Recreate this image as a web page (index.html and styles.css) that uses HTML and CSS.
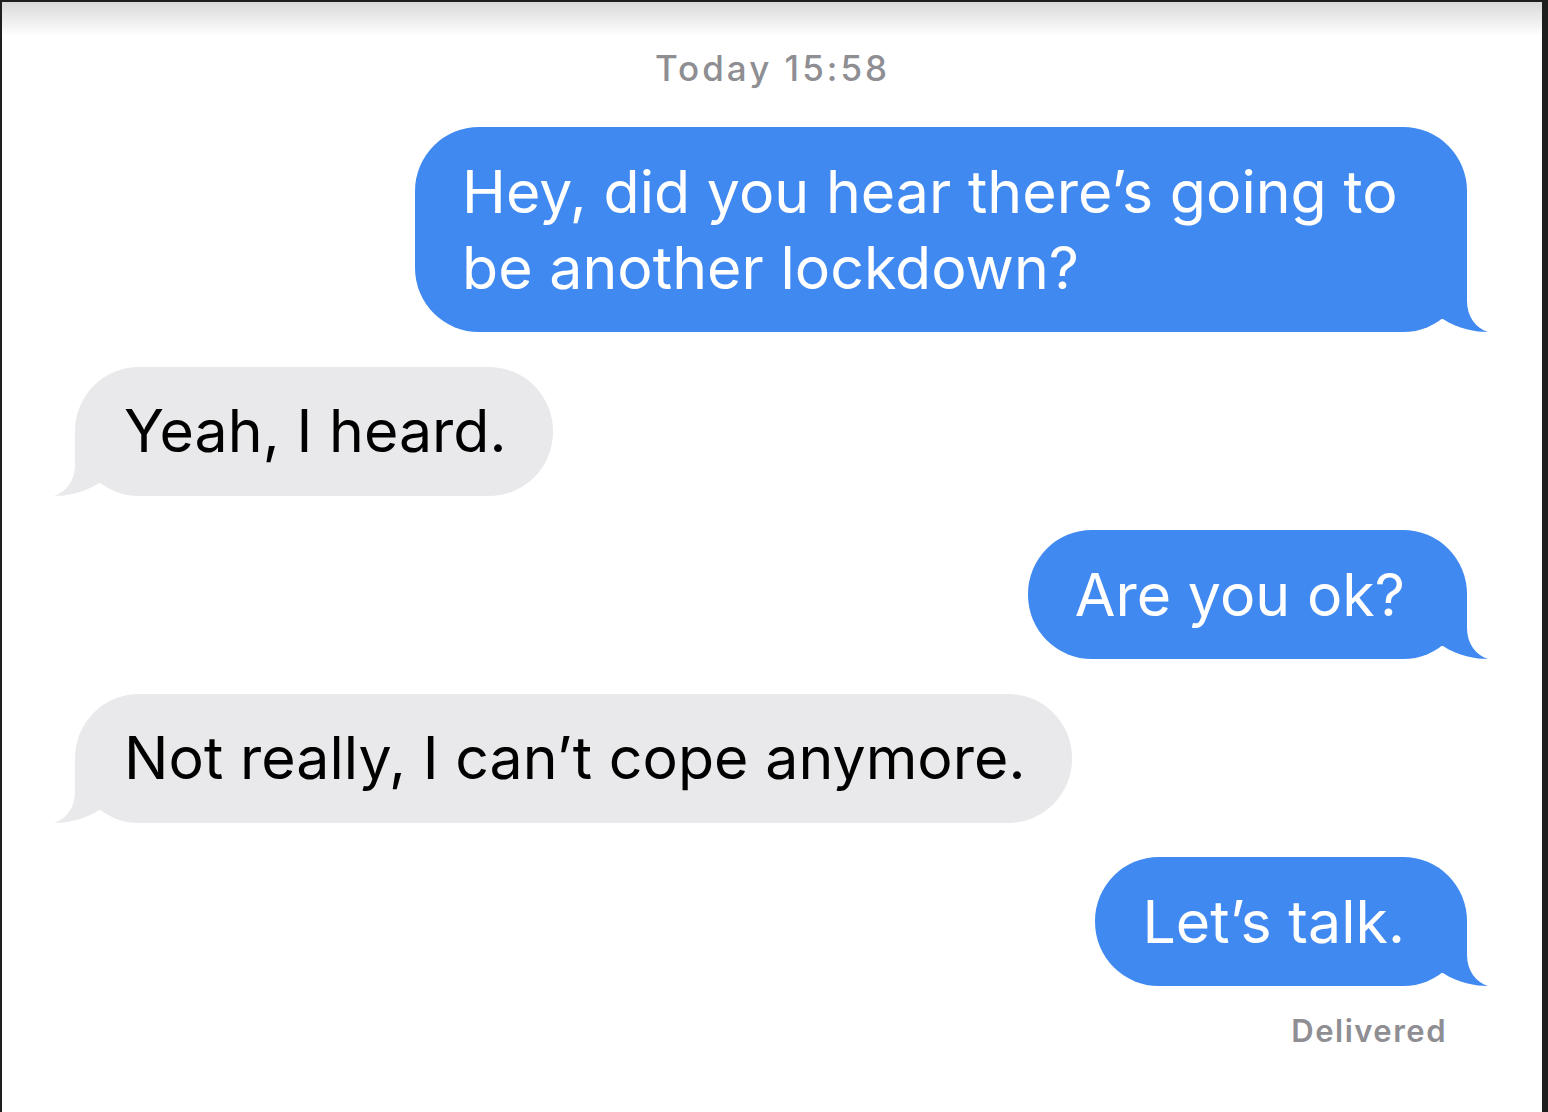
FILE: index.html
```html
<!DOCTYPE html>
<html lang="en">
<head>
<meta charset="utf-8">
<title>Messages</title>
<link rel="stylesheet" href="styles.css">
</head>
<body>
<div class="screen">
  <div class="thread">
    <div class="stamp">Today 15:58</div>
    <div class="bubble sent wide">Hey, did you hear there’s going to be another lockdown?<svg class="tail" viewBox="0 0 60 66" aria-hidden="true"><path d="M39 0 L39 35 C39 51 48 62 60 66 C48 66 30 63 15 53 L0 53 L0 0 Z"/></svg></div>
    <div class="bubble received">Yeah, I heard.<svg class="tail" viewBox="0 0 60 66" aria-hidden="true"><path d="M39 0 L39 35 C39 51 48 62 60 66 C48 66 30 63 15 53 L0 53 L0 0 Z"/></svg></div>
    <div class="bubble sent">Are you ok?<svg class="tail" viewBox="0 0 60 66" aria-hidden="true"><path d="M39 0 L39 35 C39 51 48 62 60 66 C48 66 30 63 15 53 L0 53 L0 0 Z"/></svg></div>
    <div class="bubble received">Not really, I can’t cope anymore.<svg class="tail" viewBox="0 0 60 66" aria-hidden="true"><path d="M39 0 L39 35 C39 51 48 62 60 66 C48 66 30 63 15 53 L0 53 L0 0 Z"/></svg></div>
    <div class="bubble sent">Let’s talk.<svg class="tail" viewBox="0 0 60 66" aria-hidden="true"><path d="M39 0 L39 35 C39 51 48 62 60 66 C48 66 30 63 15 53 L0 53 L0 0 Z"/></svg></div>
    <div class="status">Delivered</div>
  </div>
</div>
</body>
</html>
```
FILE: styles.css
```css
html, body {
  margin: 0;
  padding: 0;
  background: #1e1e1e;
  height: 100%;
}

.screen {
  margin: 2px 6px 0 2px;
  height: 1110px;
  background: linear-gradient(to bottom, #d9d9d9 0px, #f4f4f4 24px, #ffffff 34px);
  font-family: Inter, "Noto Sans", "Liberation Sans", sans-serif;
  overflow: hidden;
}

.thread {
  display: flex;
  flex-direction: column;
  gap: 34.5px;
  padding: 0 75px 0 73px;
}

.stamp {
  margin-top: 48px;
  margin-bottom: 6.5px;
  padding-left: 3px;
  text-align: center;
  font-size: 35px;
  font-weight: 500;
  letter-spacing: 3px;
  line-height: 36px;
  color: #8e8e93;
}

.bubble {
  position: relative;
  font-size: 59px;
  letter-spacing: 0.05px;
  line-height: 76px;
  padding: 26.5px 48px;
  border-radius: 64px;
  max-width: 1052px;
  box-sizing: border-box;
}

.bubble .tail {
  position: absolute;
  bottom: 0;
  width: 60px;
  height: 66px;
}

.sent {
  align-self: flex-end;
  background: #4089f1;
  color: #ffffff;
  padding-left: 47px;
  padding-right: 62px;
}

.sent .tail {
  right: -21px;
  fill: #4089f1;
}

.received {
  align-self: flex-start;
  background: #e9e9eb;
  color: #000000;
  padding-left: 49px;
  padding-right: 46px;
}

.received .tail {
  left: -21px;
  fill: #e9e9eb;
  transform: scaleX(-1);
}

.status {
  align-self: flex-end;
  margin-top: -6.5px;
  padding-right: 20px;
  font-size: 31px;
  font-weight: 600;
  letter-spacing: 1.5px;
  line-height: 34px;
  color: #8e8e93;
}
```
